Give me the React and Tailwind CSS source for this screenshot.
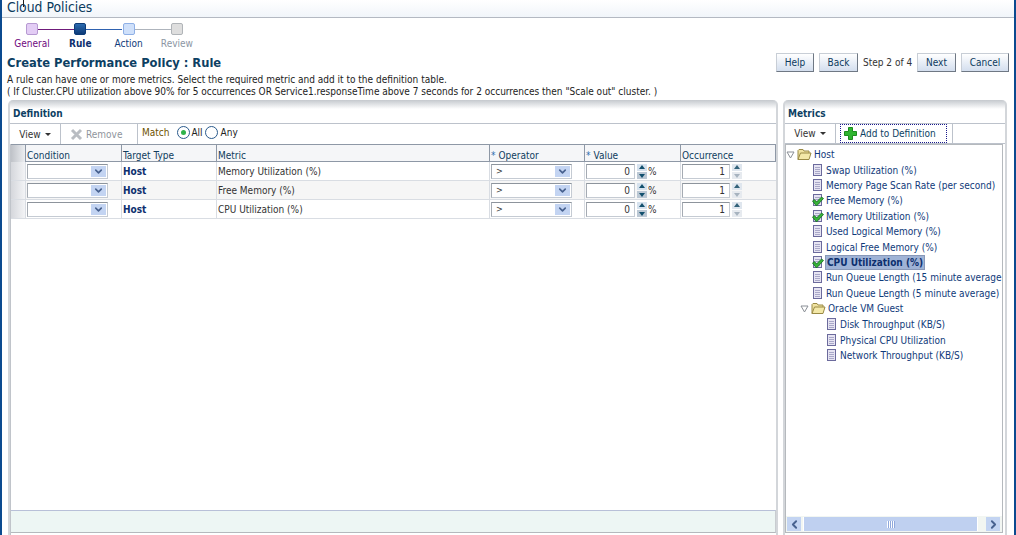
import { ChevronDown, ChevronLeft, ChevronRight } from "lucide-react";

const font = { fontFamily: '"DejaVu Sans Condensed", "Liberation Sans", Arial, sans-serif' };

const DocIcon = ({ checked }) => (
  <span className="relative w-[11px] h-[13px] shrink-0">
    <svg width="11" height="13" viewBox="0 0 11 13">
      <rect x="1.5" y="0.5" width="8" height="11" fill="#e6e4f2" stroke="#6b6a9c" />
      <path d="M3 3.5h5M3 5.5h5M3 7.5h5M3 9.5h5" stroke="#a9a8c8" />
    </svg>
    {checked && (
      <svg className="absolute left-[0px] top-[2px]" width="12" height="11" viewBox="0 0 12 11">
        <path d="M0.500 5L2.500 3.500L4.500 6L9.500 1L11.500 2.500L4.500 10Z" fill="#37b337" stroke="#14691f" strokeWidth="0.8" />
      </svg>
    )}
  </span>
);

const Folder = () => (
  <svg className="shrink-0" width="15" height="13" viewBox="0 0 15 13">
    <path d="M1 11.5V2.500L2 1.500H6L7 3H12V5" fill="#efe2a0" stroke="#9a8a45" />
    <path d="M1 11.5L3.500 5H14L12 11.5Z" fill="#f3e8a8" stroke="#9a8a45" />
  </svg>
);

const Twisty = () => (
  <svg className="shrink-0" width="9" height="8" viewBox="0 0 9 8">
    <path d="M1 1H8L4.500 7Z" fill="#fff" stroke="#8a8f96" />
  </svg>
);

const MetricRow = ({ label, checked, selected, indent }) => (
  <div className={`flex items-center h-[15.4px] whitespace-nowrap ${indent ? "pl-[40px]" : "pl-[26px]"}`}>
    <DocIcon checked={checked} />
    {selected ? (
      <span className="ml-[2px] px-[1px] font-bold bg-[#9fb3d6] border border-[#8898b8] text-[#0c2f6e] leading-[13px]">{label}</span>
    ) : (
      <span className="ml-[3px] text-[#0f3a7a]">{label}</span>
    )}
  </div>
);

const Button = ({ children, width }) => (
  <button className={`${width} h-[19px] text-[10px] text-[#0c3a5e] border border-[#c8ced6] border-r-[#6f7884] border-b-[#6f7884] bg-gradient-to-b from-white to-[#d3deee]`}>
    {children}
  </button>
);

const Select = ({ value, width }) => (
  <div className={`${width} h-[15px] flex items-center justify-between bg-white border border-[#c5cbd3] border-t-[#8d949c] border-l-[#a5abb3] pl-[4px] pr-[1px]`}>
    <span className="text-[9px] leading-none text-[#333]">{value}</span>
    <span className="w-[15px] h-[11px] bg-[#c3d4f2] flex items-center justify-center">
      <ChevronDown size={11} strokeWidth={3.5} color="#47618f" />
    </span>
  </div>
);

const Spinner = ({ dim }) => (
  <span className="flex flex-col gap-[1px] ml-[2px]">
    <svg width="10" height="7" viewBox="0 0 10 7"><rect width="10" height="7" fill={dim ? "#dfe6ee" : "#d6e2ee"} /><path d="M5 1L8 5H2Z" fill={dim ? "#33627a" : "#12506e"} /></svg>
    <svg width="10" height="7" viewBox="0 0 10 7"><rect width="10" height="7" fill={dim ? "#e6eaef" : "#bcc8d4"} /><path d="M5 6L2 2H8Z" fill={dim ? "#a7b3bf" : "#12506e"} /></svg>
  </span>
);

const NumberInput = ({ value, unit }) => (
  <div className="flex items-center">
    <div className={`${unit ? "w-[49px]" : "w-[48px]"} h-[15px] bg-white border border-[#c5cbd3] border-t-[#8d949c] border-l-[#a5abb3] text-right pr-[4px] text-[10px] leading-[13px] text-[#333]`}>
      {value}
    </div>
    <Spinner dim={!unit} />
    {unit && <span className="ml-[1px] text-[#333]">{unit}</span>}
  </div>
);

const columns = "grid grid-cols-[14px_96px_95px_273px_95px_96px_96px]";

const Head = ({ children, req }) => (
  <div className="border-l border-[#8e98a6] flex items-center pl-[1px] pt-[3px] text-[#0f3d5e]">
    {req && <span className="text-[#2f6fb0] mr-[3px]">*</span>}
    {children}
  </div>
);

const Cell = ({ children }) => (
  <div className="border-l border-[#d9dde3] flex items-center pl-[1px]">{children}</div>
);

const rules = ["Memory Utilization (%)", "Free Memory (%)", "CPU Utilization (%)"];

const metrics = [
  { label: "Swap Utilization (%)" },
  { label: "Memory Page Scan Rate (per second)" },
  { label: "Free Memory (%)", checked: true },
  { label: "Memory Utilization (%)", checked: true },
  { label: "Used Logical Memory (%)" },
  { label: "Logical Free Memory (%)" },
  { label: "CPU Utilization (%)", checked: true, selected: true },
  { label: "Run Queue Length (15 minute average)" },
  { label: "Run Queue Length (5 minute average)" },
];

const guest = ["Disk Throughput (KB/S)", "Physical CPU Utilization", "Network Throughput (KB/S)"];

const steps = [
  { label: "General", box: "bg-[#e3cdf5] border-[#b79ad2]", text: "text-[#6f0a80]", line: "bg-[#6f1a7a]" },
  { label: "Rule", box: "bg-gradient-to-b from-[#2d6cb0] to-[#0d3b78] border-[#0d3b78]", text: "text-[#0c2f6e] font-bold", line: "bg-[#2f62b0]" },
  { label: "Action", box: "bg-[#cfe0fa] border-[#8fb0e6]", text: "text-[#0f3a7a]", line: "bg-[#aeb4bc]" },
  { label: "Review", box: "bg-[#dedede] border-[#b0b4b8]", text: "text-[#8c96a3]" },
];

export default function App() {
  return (
    <div style={font} className="relative w-[1016px] h-[535px] overflow-hidden bg-white border-l-2 border-r-2 border-l-[#0b4a8f] border-r-[#0b4a8f] text-[10px] text-[#222] flex flex-col">
      {/* page title */}
      <div className="h-[18px] shrink-0 border-b border-[#b4b9c2] bg-gradient-to-b from-white to-[#f1f5fa] pl-[5px] text-[13.800px] leading-[14px] text-[#0a3a5c]">
        Cloud Policies
      </div>
      <span className="absolute left-[21px] top-0 w-[1px] h-[7px] bg-[#222]" />

      {/* train */}
      <div className="h-[35px] shrink-0 flex pl-[5px] pt-[5px]">
        {steps.map((s) => (
          <div key={s.label} className="w-[48.300px] flex flex-col items-start">
            <div className="flex items-center w-full pl-[19px]">
              <span className={`w-[12px] h-[12px] rounded-[2px] border shrink-0 ${s.box}`} />
              {s.line && <span className={`h-[1px] w-[36px] shrink-0 ${s.line}`} />}
            </div>
            <span className={`w-[50px] text-center leading-[15px] mt-[1px] ${s.text}`}>{s.label}</span>
          </div>
        ))}
      </div>

      {/* heading */}
      <div className="h-[47px] shrink-0 flex justify-between pl-[5px] pr-[5px]">
        <div>
          <h1 className="text-[12.800px] font-bold leading-[18px] mt-[1px] text-[#0d3f63]">Create Performance Policy : Rule</h1>
          <p className="leading-[12px] mt-[2px]">A rule can have one or more metrics. Select the required metric and add it to the definition table.</p>
          <p className="leading-[12px]">( If Cluster.CPU utilization above 90% for 5 occurrences OR Service1.responseTime above 7 seconds for 2 occurrences then "Scale out" cluster. )</p>
        </div>
        <div className="flex items-start gap-[5px]">
          <Button width="w-[38px]">Help</Button>
          <Button width="w-[39px]">Back</Button>
          <span className="w-[49px] text-center leading-[19px] whitespace-nowrap text-[#333]">Step 2 of 4</span>
          <Button width="w-[39px]">Next</Button>
          <Button width="w-[48px]">Cancel</Button>
        </div>
      </div>

      <div className="flex-1 min-h-0 flex gap-[5px] pl-[6px]">
        {/* definition panel */}
        <div className="w-[770px] flex flex-col rounded-t-[5px] border-x-2 border-[#d3d6da] bg-gradient-to-b from-[#c5c9ce] to-white to-[9px] pt-[7px]">
          <div className="h-[16px] pl-[3px] font-bold text-[#0d3f63] leading-[14px] shrink-0">Definition</div>
          <div className="h-[21px] shrink-0 flex items-center border-t border-[#bcc2cb]">
            <div className="w-[51px] h-full flex items-center justify-center border-r border-[#bcc2cb] text-[#333] gap-[4px]">
              View <span className="w-0 h-0 border-x-[3px] border-x-transparent border-t-[3px] border-t-[#333]" />
            </div>
            <div className="w-[77px] h-full flex items-center border-r border-[#bcc2cb] pl-[9px] text-[#8f959c]">
              <svg width="13" height="13" viewBox="0 0 13 13" className="mr-[3px]">
                <path d="M2 2L11 11M11 2L2 11" stroke="#b9bdc2" strokeWidth="3" />
              </svg>
              Remove
            </div>
            <div className="flex items-center pb-[4px]">
              <span className="ml-[4px] text-[#6e5200]">Match</span>
              <span className="ml-[8px] w-[13px] h-[13px] rounded-full border border-[#2a5a8c] bg-white flex items-center justify-center">
                <span className="w-[5px] h-[5px] rounded-full bg-[#2fb24a]" />
              </span>
              <span className="ml-[1px]">All</span>
              <span className="ml-[2px] w-[13px] h-[13px] rounded-full border border-[#2a5a8c] bg-white" />
              <span className="ml-[3px]">Any</span>
            </div>
          </div>

          {/* table */}
          <div className="flex-1 min-h-0 flex flex-col border-l border-[#c0c4ca]">
            <div className={`${columns} h-[18px] shrink-0 border-y border-y-[#8e98a6] bg-[#f5f6f8]`}>
              <div className="bg-gradient-to-r from-[#bfc2c8] to-[#eceef1]" />
              <Head>Condition</Head>
              <Head>Target Type</Head>
              <Head>Metric</Head>
              <Head req>Operator</Head>
              <Head req>Value</Head>
              <div className="border-x border-[#8e98a6] flex items-center pl-[1px] pt-[3px] text-[#0f3d5e]">Occurrence</div>
            </div>
            {rules.map((metric, i) => (
              <div key={metric} className={`${columns} h-[19px] shrink-0 border-b border-[#d9dde3] ${i === 1 ? "bg-[#f6f6f6]" : "bg-white"}`}>
                <div className="bg-gradient-to-r from-[#d5d7dc] to-[#f3f4f6]" />
                <Cell><Select width="w-[81px]" /></Cell>
                <Cell><span className="font-bold text-[#0c2f6e] pt-[1px]">Host</span></Cell>
                <Cell><span className="text-[#333] pt-[1px]">{metric}</span></Cell>
                <Cell><Select value=">" width="w-[81px]" /></Cell>
                <Cell><NumberInput value="0" unit="%" /></Cell>
                <Cell><NumberInput value="1" /></Cell>
              </div>
            ))}
            <div className="flex-1" />
            <div className="h-[23px] shrink-0 mb-[2px] border-t border-t-[#b8c0d8] border-b border-b-[#b5b9bd] border-r border-r-[#c8ccd0] bg-[#edf6f4]" />
          </div>
        </div>

        {/* metrics panel */}
        <div className="w-[224px] flex flex-col rounded-t-[5px] border-x-2 border-[#d3d6da] bg-gradient-to-b from-[#c5c9ce] to-white to-[9px] pt-[7px]">
          <div className="h-[16px] pl-[3px] font-bold text-[#0d3f63] leading-[14px] shrink-0">Metrics</div>
          <div className="h-[21px] shrink-0 flex items-center border-y border-[#bcc2cb]">
            <div className="w-[51px] h-full flex items-center justify-center border-r border-[#bcc2cb] text-[#333] gap-[4px]">
              View <span className="w-0 h-0 border-x-[3px] border-x-transparent border-t-[3px] border-t-[#333]" />
            </div>
            <div className="ml-[4px] pr-[5px] w-[107px] h-[19px] border border-dotted border-[#1a1a8c] flex items-center pl-[3px] text-[#0d3f63]">
              <svg width="13" height="13" viewBox="0 0 13 13" className="mr-[3px] shrink-0">
                <path d="M4.500 0.500H8.500V4.500H12.500V8.500H8.500V12.500H4.500V8.500H0.500V4.500H4.500Z" fill="#2fb52f" stroke="#1d8a1d" />
              </svg>
              <span className="whitespace-nowrap">Add to Definition</span>
            </div>
            <div className="h-full border-r border-[#bcc2cb] ml-[5px]" />
          </div>

          {/* tree */}
          <div className="flex-1 min-h-0 mr-[2px] mb-[2px] flex flex-col border border-[#b5b9bd] overflow-hidden">
            <div className="flex-1 min-h-0 pt-[2px] overflow-hidden">
              <div className="flex items-center h-[15.4px] text-[#0f3a7a]">
                <Twisty />
                <span className="ml-[2px]"><Folder /></span>
                <span className="ml-[2px]">Host</span>
              </div>
              {metrics.map((m) => (
                <MetricRow key={m.label} {...m} />
              ))}
              <div className="flex items-center h-[15.4px] pl-[14px] text-[#0f3a7a]">
                <Twisty />
                <span className="ml-[2px]"><Folder /></span>
                <span className="ml-[2px]">Oracle VM Guest</span>
              </div>
              <div className="pt-[1px]">
                {guest.map((label) => (
                  <MetricRow key={label} label={label} indent />
                ))}
              </div>
            </div>
            <div className="h-[16px] shrink-0 flex items-center bg-[#f2f6f2] pl-[1px] pr-[2px]">
              <span className="w-[14px] h-[14px] bg-[#c3d4f2] flex items-center justify-center">
                <ChevronLeft size={13} strokeWidth={3.5} color="#47618f" />
              </span>
              <div className="ml-[2px] w-[175px] h-[14px] bg-[#bfd0f0] border-x border-white flex items-center justify-center">
                <span className="w-[8px] h-[7px] bg-[repeating-linear-gradient(90deg,#fff_0,#fff_1px,#8fa8dc_1px,#8fa8dc_2px)]" />
              </div>
              <span className="flex-1" />
              <span className="w-[14px] h-[14px] bg-[#c3d4f2] flex items-center justify-center">
                <ChevronRight size={13} strokeWidth={3.5} color="#47618f" />
              </span>
            </div>
          </div>
        </div>
      </div>
    </div>
  );
}
